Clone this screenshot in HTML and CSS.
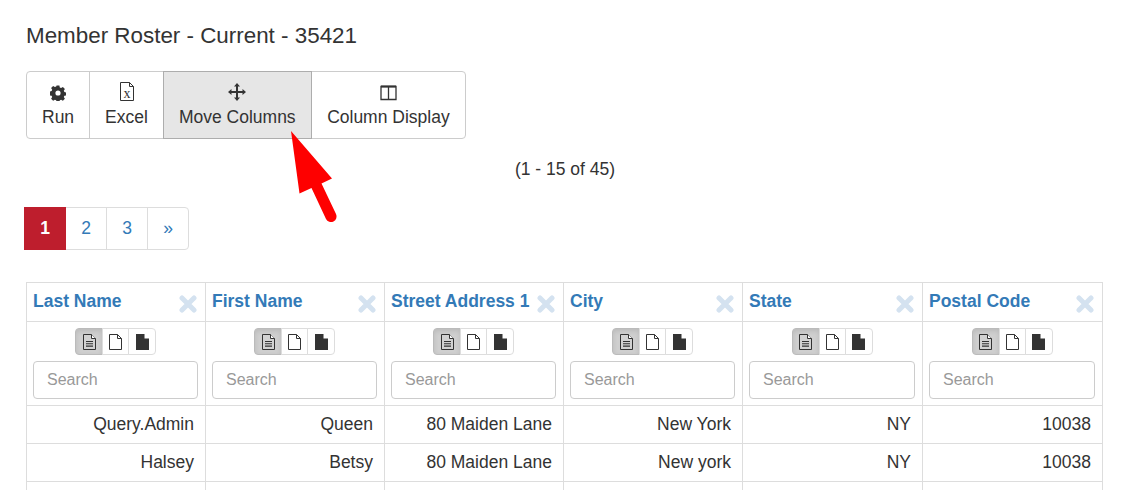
FILE: index.html
```html
<!DOCTYPE html>
<html lang="en">
<head>
    <meta charset="UTF-8">
    <meta name="viewport" content="width=device-width, initial-scale=1.0">
    <title>Member Roster</title>
    <link rel="stylesheet" href="styles.css">
</head>
<body>
    <svg width="0" height="0" class="defs">
        <symbol id="doc-lines" viewBox="0 0 13 16">
            <path d="M.5.5h8l4 4v11h-12z" fill="#d2d2d2" stroke="#333"/>
            <path d="M8.500.5v4h4" fill="#fff" stroke="#333"/>
            <path d="M3 7.500h7M3 9.800h7M3 12.100h7" stroke="#333" stroke-width="1.100"/>
        </symbol>
        <symbol id="doc-empty" viewBox="0 0 13 16">
            <path d="M.5.5h8l4 4v11h-12z" fill="#fff" stroke="#333"/>
            <path d="M8.500.5v4h4" fill="none" stroke="#333"/>
        </symbol>
        <symbol id="doc-solid" viewBox="0 0 13 16">
            <path d="M0 0h8.500v4.500h4.500v11.500h-13z" fill="#333"/>
        </symbol>
        <symbol id="close-x" viewBox="0 0 18 18">
            <path d="M3 3l12 12M15 3l-12 12" stroke="#d4e2f0" stroke-width="5" stroke-linecap="round"/>
        </symbol>
    </svg>

    <h1 class="title">Member Roster - Current - 35421</h1>

    <div class="toolbar">
        <button class="tool">
            <svg class="tool-icon" viewBox="0 0 16 16" width="16" height="16">
                <path fill="#333" fill-rule="evenodd" d="M6.600.5h2.800l.4 2 1.300.6 1.800-1.100 2 2-1.100 1.800.6 1.300 2 .4v2.800l-2 .4-.6 1.300 1.100 1.800-2 2-1.800-1.100-1.300.6-.4 2H6.600l-.4-2-1.300-.6-1.800 1.100-2-2 1.100-1.800-.6-1.300-2-.4V6.500l2-.4.6-1.300L1.100 3l2-2 1.800 1.100 1.300-.6zM8 5.400a2.600 2.600 0 1 0 0 5.200 2.600 2.600 0 0 0 0-5.200z"/>
            </svg>
            Run
        </button>
        <button class="tool">
            <svg class="tool-icon" viewBox="0 0 16 19" width="16" height="19">
                <path d="M1.500.5h9l4 4v14h-13z" fill="#fff" stroke="#333"/>
                <path d="M10.500.5v4h4" fill="none" stroke="#333"/>
                <text x="8" y="15.500" class="excel-x">x</text>
            </svg>
            Excel
        </button>
        <button class="tool tool-active">
            <svg class="tool-icon" viewBox="0 0 18 18" width="18" height="18">
                <path fill="#333" d="M9 0l3 3.500h-2v4.500h4.500v-2l3.500 3-3.500 3v-2h-4.500v4.500h2l-3 3.500-3-3.500h2v-4.500h-4.500v2l-3.500-3 3.500-3v2h4.500v-4.500h-2z"/>
            </svg>
            Move Columns
        </button>
        <button class="tool">
            <svg class="tool-icon" viewBox="0 0 17 16" width="17" height="16">
                <path d="M1 1.500h15v13h-15zM8.500 1.500v13" fill="none" stroke="#333" stroke-width="1.300"/>
                <path d="M1 1.500h15" stroke="#333" stroke-width="2"/>
            </svg>
            Column Display
        </button>
    </div>

    <p class="count">(1 - 15 of 45)</p>

    <nav class="pages">
        <a class="page page-current">1</a>
        <a class="page">2</a>
        <a class="page">3</a>
        <a class="page page-last">»</a>
    </nav>

    <table class="roster">
        <colgroup>
            <col class="col-a"><col class="col-a"><col class="col-a"><col class="col-a"><col class="col-b"><col class="col-b">
        </colgroup>
        <thead>
            <tr class="head-row">
                <th><span class="head-cell"><a>Last Name</a><svg class="close"><use href="#close-x"/></svg></span></th>
                <th><span class="head-cell"><a>First Name</a><svg class="close"><use href="#close-x"/></svg></span></th>
                <th><span class="head-cell"><a>Street Address 1</a><svg class="close"><use href="#close-x"/></svg></span></th>
                <th><span class="head-cell"><a>City</a><svg class="close"><use href="#close-x"/></svg></span></th>
                <th><span class="head-cell"><a>State</a><svg class="close"><use href="#close-x"/></svg></span></th>
                <th><span class="head-cell"><a>Postal Code</a><svg class="close"><use href="#close-x"/></svg></span></th>
            </tr>
            <tr class="filter-row">
                <td><div class="modes"><span class="mode mode-on"><svg><use href="#doc-lines"/></svg></span><span class="mode"><svg><use href="#doc-empty"/></svg></span><span class="mode"><svg><use href="#doc-solid"/></svg></span></div><input class="search" placeholder="Search"></td>
                <td><div class="modes"><span class="mode mode-on"><svg><use href="#doc-lines"/></svg></span><span class="mode"><svg><use href="#doc-empty"/></svg></span><span class="mode"><svg><use href="#doc-solid"/></svg></span></div><input class="search" placeholder="Search"></td>
                <td><div class="modes"><span class="mode mode-on"><svg><use href="#doc-lines"/></svg></span><span class="mode"><svg><use href="#doc-empty"/></svg></span><span class="mode"><svg><use href="#doc-solid"/></svg></span></div><input class="search" placeholder="Search"></td>
                <td><div class="modes"><span class="mode mode-on"><svg><use href="#doc-lines"/></svg></span><span class="mode"><svg><use href="#doc-empty"/></svg></span><span class="mode"><svg><use href="#doc-solid"/></svg></span></div><input class="search" placeholder="Search"></td>
                <td><div class="modes"><span class="mode mode-on"><svg><use href="#doc-lines"/></svg></span><span class="mode"><svg><use href="#doc-empty"/></svg></span><span class="mode"><svg><use href="#doc-solid"/></svg></span></div><input class="search" placeholder="Search"></td>
                <td><div class="modes"><span class="mode mode-on"><svg><use href="#doc-lines"/></svg></span><span class="mode"><svg><use href="#doc-empty"/></svg></span><span class="mode"><svg><use href="#doc-solid"/></svg></span></div><input class="search" placeholder="Search"></td>
            </tr>
        </thead>
        <tbody>
            <tr>
                <td>Query.Admin</td><td>Queen</td><td>80 Maiden Lane</td><td>New York</td><td>NY</td><td>10038</td>
            </tr>
            <tr>
                <td>Halsey</td><td>Betsy</td><td>80 Maiden Lane</td><td>New york</td><td>NY</td><td>10038</td>
            </tr>
            <tr>
                <td>&nbsp;</td><td></td><td></td><td></td><td></td><td></td>
            </tr>
        </tbody>
    </table>

    <!-- callout drawn on top of the screenshot -->
    <svg class="arrow" width="60" height="100" viewBox="285 128 60 100">
        <path fill="#fe0000" d="M291 131L332 178.500 321.500 183.500 336 214a5.500 5.500 0 0 1-10 5L311.500 188 299.500 193.500z"/>
    </svg>
</body>
</html>
```

FILE: styles.css
```css
html {
    overflow: hidden;
}

body {
    position: relative;
    box-sizing: border-box;
    height: 490px;
    margin: 0;
    padding: 0 28px 0 26px;
    overflow: hidden;
    background-color: #fff;
    color: #333;
    font-family: "Liberation Sans", Arial, sans-serif;
    font-size: 17.5px;
}

.defs {
    position: absolute;
}

.title {
    margin: 0;
    padding-top: 22px;
    font-size: 22.4px;
    font-weight: 400;
    line-height: 27px;
}

/* toolbar */
.toolbar {
    display: inline-flex;
    margin-top: 22px;
    vertical-align: top;
}

.tool {
    display: flex;
    flex-direction: column;
    align-items: center;
    justify-content: flex-end;
    height: 68px;
    margin-left: -1px;
    padding: 0 15px 9px;
    border: 1px solid #ccc;
    background: #fff;
    color: #333;
    font-family: inherit;
    font-size: 17.5px;
    line-height: 24px;
}

.tool:first-child {
    margin-left: 0;
    border-radius: 4px 0 0 4px;
}

.tool:last-child {
    padding: 0 15.5px 9px;
    border-radius: 0 4px 4px 0;
}

.tool-active {
    position: relative;
    border-color: #adadad;
    background-color: #e6e6e6;
}

.tool-icon {
    display: block;
    margin-bottom: 4px;
}

.excel-x {
    font-family: "Liberation Serif", serif;
    font-size: 14px;
    text-anchor: middle;
    fill: #333;
}

.count {
    margin: 19px 0 0 2px;
    line-height: 22px;
    text-align: center;
}

/* pagination */
.pages {
    display: flex;
    width: max-content;
    margin: 27px 0 0 -2px;
}

.page {
    box-sizing: border-box;
    width: 42px;
    height: 43px;
    margin-left: -1px;
    border: 1px solid #ddd;
    color: #337ab7;
    line-height: 41px;
    text-align: center;
}

.page-current {
    position: relative;
    margin-left: 0;
    border-color: #be1e2d;
    background-color: #be1e2d;
    color: #fff;
    font-weight: 700;
}

.page-last {
    border-radius: 0 4px 4px 0;
}

/* table */
.roster {
    table-layout: fixed;
    width: 1077px;
    margin-top: 32px;
    border-collapse: collapse;
}

.col-a {
    width: 179px;
}

.col-b {
    width: 180px;
}

.roster th,
.roster td {
    padding: 0 11px 0 6px;
    border: 1px solid #ddd;
}

.roster tbody td {
    height: 37px;
    text-align: right;
}

.head-row th {
    height: 39px;
    padding-bottom: 2px;
    box-sizing: border-box;
    text-align: left;
}

.head-cell {
    display: flex;
    align-items: center;
    justify-content: space-between;
    margin-right: -3px;
}

.head-cell a {
    color: #337ab7;
    font-weight: 700;
    white-space: nowrap;
}

.close {
    flex: none;
    width: 18px;
    height: 18px;
    margin-top: 5px;
}

.roster .filter-row td {
    height: 83px;
    padding-right: 7px;
    text-align: center;
    vertical-align: top;
}

.modes {
    display: flex;
    justify-content: center;
    margin-top: 6px;
}

.mode {
    display: flex;
    align-items: center;
    justify-content: center;
    box-sizing: border-box;
    width: 27px;
    height: 27px;
    margin-left: -1px;
    border: 1px solid #ddd;
    background: #fff;
}

.mode svg {
    width: 13px;
    height: 16px;
}

.mode:last-child {
    width: 28px;
    border-radius: 0 4px 4px 0;
}

.mode-on {
    width: 28px;
    margin-left: 0;
    border-color: #bbb;
    border-radius: 4px 0 0 4px;
    background-color: #cfcfcf;
    box-shadow: inset 0 2px 5px rgba(0, 0, 0, 0.1);
}

.search {
    display: block;
    box-sizing: border-box;
    width: 100%;
    height: 38px;
    margin-top: 6px;
    padding: 0 13px;
    border: 1px solid #ccc;
    border-radius: 4px;
    color: #555;
    font-family: inherit;
    font-size: 16px;
}

.search::placeholder {
    color: #999;
}

.arrow {
    position: absolute;
    top: 128px;
    left: 285px;
}
```
